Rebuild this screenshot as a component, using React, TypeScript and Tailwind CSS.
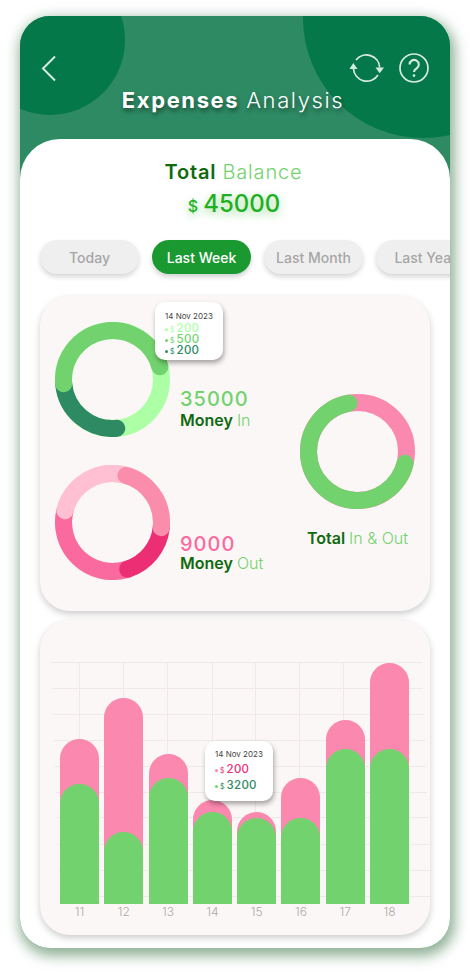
import React from "react";

function arc(a0: number, a1: number, c = 57.5, r = 49) {
  const p = (a: number) => {
    const t = (a * Math.PI) / 180;
    return `${(c + r * Math.sin(t)).toFixed(2)} ${(c - r * Math.cos(t)).toFixed(2)}`;
  };
  const sweep = ((a1 - a0) % 360 + 360) % 360;
  return `M ${p(a0)} A ${r} ${r} 0 ${sweep > 180 ? 1 : 0} 1 ${p(a1)}`;
}

function Donut({ base, segs }: { base: string; segs: [string, number, number][] }) {
  return (
    <svg width="115" height="115" viewBox="0 0 115 115" className="block shrink-0" fill="none">
      <circle cx="57.5" cy="57.5" r="49" stroke={base} strokeWidth="17" />
      {segs.map(([color, a0, a1], i) => (
        <path key={i} d={arc(a0, a1)} stroke={color} strokeWidth="17" strokeLinecap="round" />
      ))}
    </svg>
  );
}

function Pill({ label, active }: { label: string; active?: boolean }) {
  return (
    <div
      className={
        active
          ? "w-[99px] h-[34px] shrink-0 rounded-full bg-[#1a9930] text-white text-[14px] font-medium flex items-center justify-center shadow-[0_3px_5px_rgba(0,0,0,0.18)]"
          : "w-[99px] h-[34px] shrink-0 rounded-full bg-[#efefef] text-[#a6a6a6] text-[14px] font-medium flex items-center justify-center shadow-[0_3px_5px_rgba(0,0,0,0.16)]"
      }
    >
      {label}
    </div>
  );
}

function TipRow({ dot, color, value, big }: { dot: string; color: string; value: string; big?: boolean }) {
  return (
    <div className={big ? "flex items-center h-[16px]" : "flex items-center h-[11px]"}>
      <span className="w-[3px] h-[3px] rounded-full mr-[2px] mt-[2px]" style={{ background: dot }} />
      <span className="text-[7px] leading-[9px] mr-[2px] mt-[2px]" style={{ color }}>$</span>
      <span className="text-[11.5px] font-medium tracking-[0.3px] leading-[11px]" style={{ color }}>{value}</span>
    </div>
  );
}

const bars = [
  { label: "11", pink: 165, green: 120 },
  { label: "12", pink: 206, green: 72 },
  { label: "13", pink: 150, green: 126 },
  { label: "14", pink: 104, green: 92 },
  { label: "15", pink: 92, green: 86 },
  { label: "16", pink: 126, green: 86 },
  { label: "17", pink: 184, green: 155 },
  { label: "18", pink: 241, green: 155 },
];

const rows = [0, 26, 52, 78, 104, 130, 155, 182, 208, 234];
const cols = [39, 83, 127, 172, 215, 259, 303];

export default function App() {
  return (
    <div className="w-[470px] h-[972px] bg-white pt-[16px] pl-[20px] font-['Inter','Liberation_Sans',sans-serif]">
      <div className="relative w-[430px] h-[932px] rounded-[30px] overflow-hidden bg-[#2d8a63] shadow-[2px_5px_13px_3px_rgba(70,125,80,0.6)] flex flex-col">
        <div className="absolute left-[-45px] top-[-51px] w-[150px] h-[150px] rounded-full bg-[#05784a]" />
        <div className="absolute left-[283px] top-[-118px] w-[240px] h-[240px] rounded-full bg-[#05784a]" />

        <div className="relative h-[123px] shrink-0 flex flex-col">
          <div className="flex items-start justify-between pt-[37px] pl-[20px] pr-[21px] h-[71px]">
            <svg width="20" height="30" viewBox="0 0 20 30" fill="none">
              <path d="M15 3.5 L3 15.5 L15 27.5" stroke="#d6ebdf" strokeWidth="2" />
            </svg>
            <div className="flex items-center gap-[14px]">
              <svg width="36" height="30" viewBox="0 0 36 30" fill="none">
                <path d="M7 7 A13.3 13.3 0 0 1 30.7 14.5" stroke="#d6ebdf" strokeWidth="1.7" />
                <path d="M4.5 16 A13.3 13.3 0 0 0 29 22" stroke="#d6ebdf" strokeWidth="1.7" />
                <path d="M4.3 10 L8.5 16 L0.5 16 Z" fill="#d6ebdf" />
                <path d="M30.7 20.3 L26.5 14.5 L35 14.5 Z" fill="#d6ebdf" />
              </svg>
              <svg width="30" height="30" viewBox="0 0 30 30" fill="none">
                <circle cx="15" cy="15" r="14" stroke="#d6ebdf" strokeWidth="1.7" />
                <path d="M10.6 11.5 A4.6 4.6 0 1 1 17.5 15.5 C15.8 16.4 15 17.2 15 19" stroke="#d6ebdf" strokeWidth="2.1" />
                <circle cx="15" cy="22.6" r="1.3" fill="#d6ebdf" />
              </svg>
            </div>
          </div>
          <div className="h-[26px] flex items-center justify-center text-[22px] tracking-[1.6px] text-white leading-none mr-[4px] [text-shadow:1px_3px_4px_rgba(0,0,0,0.45)]">
            <span className="font-bold">Expenses</span>
            <span className="font-light ml-[7px]">Analysis</span>
          </div>
        </div>

        <div className="relative flex-1 bg-white rounded-t-[40px] flex flex-col overflow-hidden">
          <div className="pt-[21px] flex items-start justify-center text-[20px] leading-[24px] tracking-[0.85px] ml-[-3px]">
            <span className="font-semibold text-[#0f6a0f]">Total</span>
            <span className="font-light text-[#72d36e] ml-[6px]">Balance</span>
          </div>
          <div className="mt-[2px] h-[36px] flex items-center justify-center text-[#1fb01f] [text-shadow:0_3px_8px_rgba(31,176,31,0.45)] ml-[-2px]">
            <span className="text-[16px] font-medium mr-[5px] mt-[4px]">$</span>
            <span className="text-[24px] font-medium">45000</span>
          </div>

          <div className="mt-[18px] flex gap-[13px] pl-[20px]">
            <Pill label="Today" />
            <Pill label="Last Week" active />
            <Pill label="Last Month" />
            <Pill label="Last Year" />
          </div>

          <div className="relative mt-[22px] mx-[20px] h-[315px] shrink-0 rounded-[30px] bg-[#fbf7f6] shadow-[0_3px_7px_rgba(0,0,0,0.2)] flex justify-between pt-[26px] pl-[15px] pr-[15px]">
            <div className="flex flex-col gap-[28px]">
              <div className="flex items-end">
                <Donut
                  base="#adffa6"
                  segs={[
                    ["#2d8a63", 175, 265],
                    ["#72d36e", 265, 75],
                  ]}
                />
                <div className="ml-[10px] mb-[7px]">
                  <div className="text-[20px] leading-[22px] font-medium tracking-[1px] text-[#72d36e]">35000</div>
                  <div className="text-[16px] leading-[20px] whitespace-nowrap">
                    <span className="font-semibold text-[#0f6a0f]">Money</span>
                    <span className="font-light text-[#72d36e] ml-[4px]">In</span>
                  </div>
                </div>
              </div>
              <div className="flex items-end">
                <Donut
                  base="#ffc0d3"
                  segs={[
                    ["#fb6a9f", 162, 284],
                    ["#ec2f74", 96, 162],
                    ["#ffc0d3", 284, 16],
                    ["#fb8dac", 16, 96],
                  ]}
                />
                <div className="ml-[10px] mb-[7px]">
                  <div className="text-[20px] leading-[18px] font-medium tracking-[1px] text-[#fb6a9f]">9000</div>
                  <div className="text-[16px] leading-[20px] whitespace-nowrap">
                    <span className="font-semibold text-[#0f6a0f]">Money</span>
                    <span className="font-light text-[#72d36e] ml-[4px]">Out</span>
                  </div>
                </div>
              </div>
            </div>
            <div className="flex flex-col items-center mt-[72px]">
              <Donut base="#fb88ae" segs={[["#72d36e", 104, 350]]} />
              <div className="mt-[19px] text-[16px] leading-[20px] whitespace-nowrap">
                <span className="font-semibold text-[#0f6a0f]">Total</span>
                <span className="font-light text-[#72d36e] ml-[4px]">In &amp; Out</span>
              </div>
            </div>
            <div className="absolute left-[115px] top-[6px] w-[68px] h-[58px] rounded-[10px] bg-white shadow-[1px_3px_5px_rgba(0,0,0,0.35)] pl-[10px] pt-[9px]">
              <div className="text-[8px] leading-[11px] text-[#444] whitespace-nowrap mb-[1px]">14 Nov 2023</div>
              <TipRow dot="#adffa6" color="#adffa6" value="200" />
              <TipRow dot="#72d36e" color="#72d36e" value="500" />
              <TipRow dot="#2d8a63" color="#2d8a63" value="200" />
            </div>
          </div>

          <div className="relative mt-[9px] mx-[20px] h-[315px] shrink-0 rounded-[30px] bg-[#fbf7f6] shadow-[0_3px_7px_rgba(0,0,0,0.2)] pt-[43px] pl-[20px]">
            <svg className="absolute left-[0px] top-[42px]" width="392" height="240" viewBox="0 0 392 240" fill="none">
              {rows.map((y, i) => (
                <line key={y} x1={11 + i * 0.9} x2={382 + i} y1={y + 0.5} y2={y + 0.5} stroke="#efeae9" strokeWidth="1" />
              ))}
              {cols.map((x) => (
                <line key={x} x1={x + 0.5} x2={x + 0.5} y1="0" y2="234" stroke="#efeae9" strokeWidth="1" />
              ))}
            </svg>
            <div className="relative flex items-end justify-between w-[349px] h-[241px]">
              {bars.map((b) => (
                <div
                  key={b.label}
                  className="w-[39px] rounded-t-[20px] bg-[#fb88ae] flex flex-col justify-end"
                  style={{ height: b.pink }}
                >
                  <div className="w-[39px] rounded-t-[20px] bg-[#72d36e]" style={{ height: b.green }} />
                </div>
              ))}
            </div>
            <div className="relative flex justify-between w-[349px] mt-[1px]">
              {bars.map((b) => (
                <div key={b.label} className="w-[39px] text-center text-[12px] font-light leading-[14px] text-[#aaaaaa]">
                  {b.label}
                </div>
              ))}
            </div>
            <div className="absolute left-[165px] top-[121px] w-[68px] h-[60px] rounded-[10px] bg-white shadow-[1px_3px_5px_rgba(0,0,0,0.35)] pl-[10px] pt-[8px]">
              <div className="text-[8px] leading-[11px] text-[#444] whitespace-nowrap mb-[1px]">14 Nov 2023</div>
              <TipRow dot="#fb88ae" color="#ec2f74" value="200" big />
              <TipRow dot="#72d36e" color="#2d8a63" value="3200" big />
            </div>
          </div>
        </div>
      </div>
    </div>
  );
}
